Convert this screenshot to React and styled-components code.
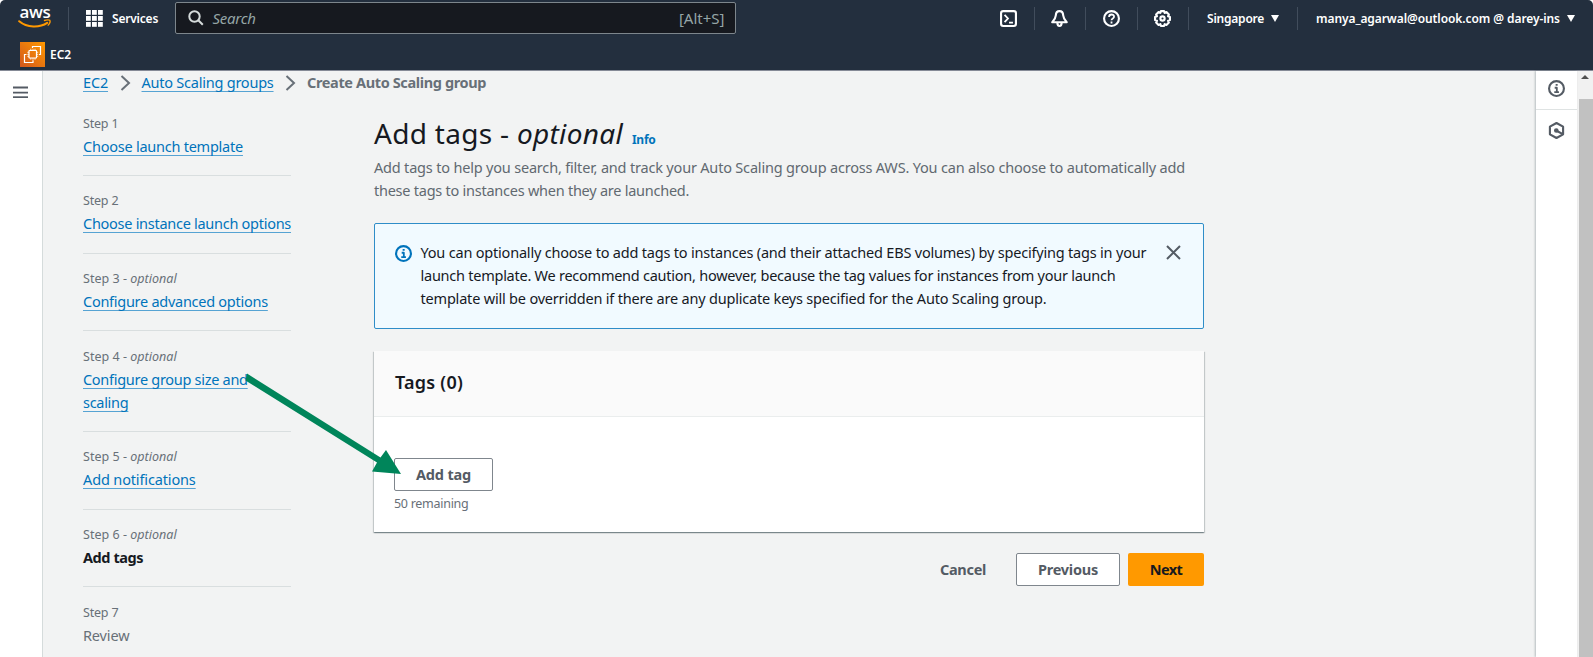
import React from 'react';
import styled, { createGlobalStyle, css } from 'styled-components';

const GlobalStyle = createGlobalStyle`
  *, *::before, *::after { box-sizing: border-box; }
  html, body { margin: 0; height: 100%; overflow: hidden; background: #fff; }
  body { font-family: "Noto Sans", "Open Sans", sans-serif; font-size: 14.5px; color: #16191f; }
`;

const tracking = css`
  letter-spacing: ${(p) => p.$track || 0}px;
`;

const Page = styled.div`
  position: relative;
  display: flex;
  flex-direction: column;
  height: 657px;
  overflow: hidden;
`;

/* ---------- header ---------- */
const Header = styled.header`
  height: 71px;
  flex: none;
  background: #232f3e;
  border-bottom: 1px solid #858a96;
  border-radius: 5px 5px 0 0;
  color: #fff;
`;

const TopBar = styled.div`
  display: flex;
  align-items: center;
  height: 36px;
  padding: 0 18px 0 18px;
`;

const Separator = styled.span`
  width: 1px;
  height: 23px;
  background: #414d5c;
`;

const ServicesButton = styled.div`
  display: flex;
  align-items: center;
  gap: 9px;
  margin-left: 17px;
  width: 88.5px;
`;

const NavLabel = styled.span`
  font-size: 12px;
  font-weight: 600;
  line-height: 18px;
  white-space: nowrap;
  padding-top: 1px;
  ${tracking}
`;

const SearchBox = styled.div`
  display: flex;
  align-items: center;
  width: 561px;
  height: 32px;
  padding: 0 10px 1px 12px;
  background: #16191f;
  border: 1px solid #7d868c;
  border-radius: 2px;
  color: #95a5a6;
  font-size: 15px;
  line-height: 20px;
`;

const Placeholder = styled.span`
  flex: 1;
  margin-left: 9px;
  font-style: italic;
  letter-spacing: -0.28px;
`;

const Tools = styled.div`
  display: flex;
  align-items: center;
  margin-left: auto;
`;

const ToolButton = styled.div`
  display: flex;
  justify-content: center;
  width: 50.5px;
`;

const Dropdown = styled.div`
  display: flex;
  align-items: center;
  justify-content: space-between;
  width: ${(p) => p.$width}px;
  margin: 0 ${(p) => p.$after || 0}px 0 18px;
`;

const Caret = styled.span`
  border: 4.5px solid transparent;
  border-top: 7px solid #fff;
  border-bottom: 0;
`;

const Favorites = styled.div`
  display: flex;
  align-items: center;
  gap: 5px;
  height: 37px;
  padding-left: 20px;
`;

/* ---------- body frame ---------- */
const Body = styled.div`
  display: flex;
  flex: 1;
  min-height: 0;
`;

const LeftRail = styled.aside`
  width: 43px;
  flex: none;
  padding: 11px 0 0 13px;
  border-right: 1.5px solid #d5dbdb;
`;

const Content = styled.main`
  flex: 1;
  min-width: 0;
  overflow: hidden;
  padding-left: 40px;
  background: #f2f3f3;
`;

const RightRail = styled.aside`
  width: 41px;
  flex: none;
  z-index: 1;
  background: #fff;
  box-shadow: -1px 0 2px rgba(0, 28, 36, 0.25);
`;

const RailButton = styled.div`
  display: flex;
  align-items: center;
  justify-content: center;
  height: ${(p) => p.$height}px;
  padding-bottom: ${(p) => (p.$line ? 4 : 0)}px;
  border-bottom: ${(p) => (p.$line ? '1px solid #dfe3e3' : '0')};
`;

const Scrollbar = styled.div`
  display: flex;
  flex-direction: column;
  align-items: center;
  width: 16px;
  flex: none;
  background: #f1f1f1;
`;

const ScrollUp = styled.span`
  height: 4px;
  margin: 4px 0 20px;
  border: 4px solid transparent;
  border-bottom: 4px solid #505050;
  border-top: 0;
`;

const Thumb = styled.div`
  flex: 1;
  width: 14px;
  margin-left: 2px;
  background: #c1c1c1;
`;

/* ---------- content ---------- */
const Link = styled.a`
  color: #0073bb;
  text-decoration: underline;
  text-decoration-color: #56a3d3;
  text-decoration-thickness: 1px;
  text-decoration-skip-ink: none;
  text-underline-offset: 3px;
  ${tracking}
`;

const Breadcrumbs = styled.nav`
  display: flex;
  align-items: center;
  height: 21px;
  white-space: nowrap;
`;

const Crumb = styled.span`
  color: #687078;
  font-weight: 700;
  ${tracking}
`;

const Chevron = styled.svg`
  flex: none;
  margin: 2px 11px 0 11.5px;
`;

const Columns = styled.div`
  display: flex;
  align-items: flex-start;
  gap: 83px;
`;

const Steps = styled.ol`
  width: 208px;
  flex: none;
  margin: 5.2px 0 0;
  padding: 0;
  list-style: none;
`;

const Step = styled.li`
  padding: 14.5px 0 17.2px;
  border-top: 1px solid ${(p) => (p.$first ? 'transparent' : '#d9dedf')};
`;

const StepLabel = styled.div`
  height: 22px;
  font-size: 12.5px;
  line-height: 22px;
  color: #687078;
  ${tracking}
`;

const StepName = styled.div`
  line-height: 23px;
  color: ${(p) => (p.$active ? '#16191f' : '#687078')};
  font-weight: ${(p) => (p.$active ? 700 : 400)};
  ${tracking}
`;

const Panel = styled.section`
  width: 830px;
  padding-top: 23px;
`;

const Title = styled.h1`
  height: 36px;
  margin: 0;
  font-size: 28px;
  font-weight: 400;
  line-height: 36px;
  white-space: nowrap;
  ${tracking}
`;

const InfoLink = styled.a`
  margin-left: 9px;
  font-size: 12px;
  font-weight: 700;
  letter-spacing: -0.25px;
  color: #0073bb;
`;

const Description = styled.p`
  margin: 5px 0 0;
  color: #616970;
  line-height: 22.7px;
  white-space: nowrap;
`;

const Line = styled.span`
  display: block;
  ${tracking}
`;

const Alert = styled.div`
  display: flex;
  align-items: flex-start;
  height: 106px;
  margin-top: 21.6px;
  padding: 17px 22px 0 20px;
  background: #f1faff;
  border: 1px solid #2f8dc8;
  border-radius: 2px;
`;

const AlertText = styled.div`
  flex: 1;
  margin-left: 8.5px;
  line-height: 22.8px;
  white-space: nowrap;
`;

const AlertIcon = styled.span`
  display: flex;
  padding-top: 4px;
`;

const Card = styled.div`
  height: 181px;
  margin-top: 22px;
  background: #fff;
  box-shadow: 0 1px 1px 0 rgba(0, 28, 36, 0.3), 1px 1px 1px 0 rgba(0, 28, 36, 0.15), -1px 1px 1px 0 rgba(0, 28, 36, 0.15);
`;

const CardHeader = styled.div`
  height: 66px;
  padding: 18.5px 21px 0;
  background: #fafafa;
  border-bottom: 1px solid #eaeded;
  font-size: 18px;
  font-weight: 600;
  line-height: 25px;
  letter-spacing: 0.24px;
`;

const CardBody = styled.div`
  padding: 41px 20px 0;
`;

const Hint = styled.div`
  margin-top: 3px;
  font-size: 12.5px;
  line-height: 20px;
  color: #687078;
  letter-spacing: -0.28px;
`;

const Button = styled.button`
  display: flex;
  align-items: center;
  justify-content: center;
  width: ${(p) => p.$width}px;
  height: 33px;
  padding: 0 0 1px;
  border: 1px solid ${(p) => p.$border || 'transparent'};
  border-radius: 2px;
  background: ${(p) => p.$fill || 'transparent'};
  color: ${(p) => (p.$primary ? '#16191f' : '#545b64')};
  font: 700 14.5px "Noto Sans", sans-serif;
  ${tracking}
`;

const Actions = styled.div`
  display: flex;
  justify-content: flex-end;
  margin-top: 21px;
  gap: 8px;
`;

const Annotation = styled.svg`
  position: absolute;
  left: 240px;
  top: 368px;
  z-index: 2;
  pointer-events: none;
`;

/* ---------- icons ---------- */
const AwsMark = styled.div`
  display: flex;
  flex-direction: column;
  align-items: center;
  width: 34px;
  height: 24px;
  margin-right: 16px;
  margin-top: -4px;
`;

const AwsWord = styled.span`
  height: 15px;
  font: 600 17px/15px "Open Sans", sans-serif;
  letter-spacing: -0.3px;
`;

const AwsLogo = () => (
  <AwsMark>
    <AwsWord>aws</AwsWord>
    <svg width="34" height="9" viewBox="0 0 34 9" fill="none" stroke="#f90" strokeLinecap="round">
      <path d="M1.2 2.2C9 8.8 21.5 9 29.2 3.8" strokeWidth="2" />
      <path d="M26.5 1.5c2-.8 4.800-.8 5.300-.2.5.700-.3 3.200-1.600 4.800" strokeWidth="1.400" />
    </svg>
  </AwsMark>
);

const GridIcon = () => (
  <svg width="17" height="17" viewBox="0 0 17 17" fill="#fff">
    {[0, 6, 12].map((y) => [0, 6, 12].map((x) => <rect key={`${x}-${y}`} x={x} y={y} width="4.8" height="4.8" />))}
  </svg>
);

const SearchIcon = () => (
  <svg width="16" height="16" viewBox="0 0 16 16" fill="none" stroke="#d5dbdb" strokeWidth="2">
    <circle cx="6.500" cy="6.500" r="5.200" />
    <path d="M10.300 10.300l4.500 4.500" />
  </svg>
);

const Icon = ({ size = 17, color = '#fff', children }) => (
  <svg width={size} height={size} viewBox="0 0 16 16" fill="none" stroke={color} strokeWidth="2" strokeLinejoin="round">
    {children}
  </svg>
);

const ShellIcon = () => (
  <Icon>
    <rect x="1" y="1" width="14" height="14" rx="2" />
    <path d="M4.300 4.500L7.500 8l-3.200 3.500M8.500 11.800h3.700" strokeWidth="1.700" strokeLinejoin="miter" />
  </Icon>
);

const BellIcon = () => (
  <Icon>
    <path d="M8 1C5.500 1 4.600 3 4.500 5.200 4.300 8 3.200 9.400 1.200 11.500h13.600c-2-2.100-3.100-3.500-3.300-6.300C11.400 3 10.500 1 8 1z" />
    <path d="M6 12c0 4 4 4 4 0" />
  </Icon>
);

const HelpIcon = () => (
  <Icon>
    <circle cx="8" cy="8" r="7" />
    <path d="M5.700 6.600c0-3.200 4.700-3 4.700-.3C10.400 8 8 7.900 8 9.600M8 10.800v1.800" strokeWidth="1.700" />
  </Icon>
);

const GearIcon = () => (
  <Icon>
    <path d="M6.500 1h3l.5 1.700 1.700-.8 2.300 2.300-.8 1.700 1.800.6v3l-1.800.6.8 1.700-2.300 2.300-1.700-.8L9.500 15h-3L6 13.300l-1.700.8L2 11.800l.8-1.700L1 9.500v-3l1.800-.6L2 4.200l2.300-2.300 1.700.8z" />
    <circle cx="8" cy="8" r="2" />
  </Icon>
);

const InfoIcon = ({ color }) => (
  <Icon color={color}>
    <circle cx="8" cy="8" r="7" />
    <path d="M6.300 7.300h2v4M5.900 11.400h4.400M7.200 4.600h1.900" strokeWidth="1.700" />
  </Icon>
);

const HexIcon = () => (
  <Icon color="#545b64">
    <path d="M8 .9l6.200 3.500v7.200L8 15.100l-6.200-3.500V4.400z" />
    <circle cx="7.800" cy="8" r="1.200" fill="#545b64" stroke="#545b64" />
    <path d="M8 8.200l5.500 3" />
  </Icon>
);

const Ec2Icon = () => (
  <svg width="25" height="25" viewBox="0 0 25 25" fill="none" stroke="#fff" strokeWidth="1.200">
    <defs>
      <linearGradient id="ec2" x1="0" y1="25" x2="25" y2="0" gradientUnits="userSpaceOnUse">
        <stop offset="0" stopColor="#d2561d" />
        <stop offset="1" stopColor="#f90" />
      </linearGradient>
    </defs>
    <rect width="25" height="25" fill="url(#ec2)" stroke="none" />
    <rect x="9" y="8.500" width="7.500" height="7.500" rx="0.500" />
    <path d="M10.800 6.800v1.700M13 6.800v1.700M15 6.800v1.700M10.800 16v1.700M13 16v1.700M15 16v1.700M7.300 10.300H9M7.300 12.300H9M7.300 14.300H9M16.500 10.300h1.700M16.500 12.300h1.700M16.500 14.300h1.700" strokeWidth="0.800" />
    <path d="M12.500 6V4.500h8v8H19M6.500 12.500h-2v8h8.500v-2.300" />
  </svg>
);

const MenuIcon = () => (
  <svg width="15" height="14" viewBox="0 0 15 14" stroke="#545b64" strokeWidth="1.800">
    <path d="M0 3.500h15M0 8.700h15" />
    <path d="M0 13.200h15" />
  </svg>
);

const CrumbArrow = () => (
  <Chevron width="11" height="16" viewBox="0 0 11 16" fill="none" stroke="#687078" strokeWidth="2">
    <path d="M1.500 1l7.500 7-7.500 7" />
  </Chevron>
);

const steps = [
  { names: ['Choose launch template'], track: -0.24 },
  { names: ['Choose instance launch options'], track: -0.276 },
  { names: ['Configure advanced options'], optional: true, track: -0.27 },
  { names: ['Configure group size and', 'scaling'], optional: true, track: -0.29 },
  { names: ['Add notifications'], optional: true, track: -0.14 },
  { names: ['Add tags'], optional: true, active: true, track: -0.42 },
  { names: ['Review'], plain: true, track: -0.15 },
];

const tools = [ShellIcon, BellIcon, HelpIcon, GearIcon];

export default function App() {
  return (
    <Page>
      <GlobalStyle />
      <Header>
        <TopBar>
          <AwsLogo />
          <Separator />
          <ServicesButton>
            <GridIcon />
            <NavLabel $track={-0.2}>Services</NavLabel>
          </ServicesButton>
          <SearchBox>
            <SearchIcon />
            <Placeholder>Search</Placeholder>
            <span>[Alt+S]</span>
          </SearchBox>
          <Tools>
            {tools.map((Tool, i) => (
              <React.Fragment key={i}>
                <ToolButton>
                  <Tool />
                </ToolButton>
                <Separator />
              </React.Fragment>
            ))}
            <Dropdown $width={72} $after={18}>
              <NavLabel $track={-0.22}>Singapore</NavLabel>
              <Caret />
            </Dropdown>
            <Separator />
            <Dropdown $width={259}>
              <NavLabel $track={-0.08}>manya_agarwal@outlook.com @ darey-ins</NavLabel>
              <Caret />
            </Dropdown>
          </Tools>
        </TopBar>
        <Favorites>
          <Ec2Icon />
          <NavLabel>EC2</NavLabel>
        </Favorites>
      </Header>
      <Body>
        <LeftRail>
          <MenuIcon />
        </LeftRail>
        <Content>
          <Breadcrumbs>
            <Link $track={-0.17}>EC2</Link>
            <CrumbArrow />
            <Link $track={-0.23}>Auto Scaling groups</Link>
            <CrumbArrow />
            <Crumb $track={-0.37}>Create Auto Scaling group</Crumb>
          </Breadcrumbs>
          <Columns>
            <Steps>
              {steps.map((step, i) => (
                <Step key={i} $first={i === 0}>
                  <StepLabel $track={step.optional ? 0.02 : -0.2}>
                    Step {i + 1}
                    {step.optional && <> - <em>optional</em></>}
                  </StepLabel>
                  {step.names.map((name) => (
                    <StepName key={name} $active={step.active} $track={step.track}>
                      {step.active || step.plain ? name : <Link $track={step.track}>{name}</Link>}
                    </StepName>
                  ))}
                </Step>
              ))}
            </Steps>
            <Panel>
              <Title $track={0.3}>
                Add tags - <em>optional</em>
                <InfoLink>Info</InfoLink>
              </Title>
              <Description>
                <Line $track={-0.188}>Add tags to help you search, filter, and track your Auto Scaling group across AWS. You can also choose to automatically add</Line>
                <Line $track={-0.25}>these tags to instances when they are launched.</Line>
              </Description>
              <Alert>
                <AlertIcon>
                  <InfoIcon color="#0073bb" />
                </AlertIcon>
                <AlertText>
                  <Line $track={-0.2}>You can optionally choose to add tags to instances (and their attached EBS volumes) by specifying tags in your</Line>
                  <Line $track={-0.25}>launch template. We recommend caution, however, because the tag values for instances from your launch</Line>
                  <Line $track={-0.195}>template will be overridden if there are any duplicate keys specified for the Auto Scaling group.</Line>
                </AlertText>
                <AlertIcon>
                  <svg width="15" height="15" viewBox="0 0 15 15" stroke="#545b64" strokeWidth="2">
                    <path d="M1 1l13 13M14 1L1 14" />
                  </svg>
                </AlertIcon>
              </Alert>
              <Card>
                <CardHeader>Tags (0)</CardHeader>
                <CardBody>
                  <Button $width={99} $border="#7f868d" $fill="#fff" $track={-0.18}>Add tag</Button>
                  <Hint>50 remaining</Hint>
                </CardBody>
              </Card>
              <Actions>
                <Button $width={90} $track={-0.3}>Cancel</Button>
                <Button $width={104} $border="#7f868d" $fill="#fff" $track={-0.24}>Previous</Button>
                <Button $width={76} $fill="#f90" $primary $track={-0.6}>Next</Button>
              </Actions>
            </Panel>
          </Columns>
        </Content>
        <RightRail>
          <RailButton $height={39} $line>
            <InfoIcon color="#545b64" />
          </RailButton>
          <RailButton $height={41}>
            <HexIcon />
          </RailButton>
        </RightRail>
        <Scrollbar>
          <ScrollUp />
          <Thumb />
        </Scrollbar>
      </Body>
      <Annotation width="165" height="110" viewBox="240 368 165 110" fill="#00855a">
        <path d="M247 373.500L380.500 457.500 386 450 401 474 372 471.500 377 462.500 245.500 380.500z" />
      </Annotation>
    </Page>
  );
}
